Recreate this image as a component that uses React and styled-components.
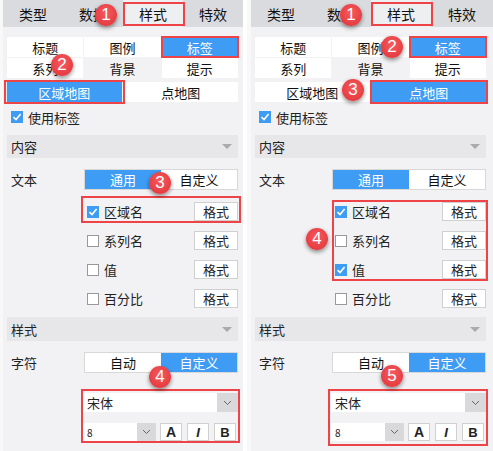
import styled, { createGlobalStyle, css } from "styled-components";

const RED = "#ee4447";
const BLUE = "#3e9cf5";

const GlobalStyle = createGlobalStyle`
  body {
    margin: 0;
    background: #fff;
    font-family: "Noto Sans CJK SC", "Noto Sans", sans-serif;
    font-size: 13px;
    color: #222;
  }
`;

// red annotation frame drawn over an element
const markBox = css`
  position: relative;
  &::after {
    content: "";
    position: absolute;
    inset: ${(p) => p.$mark};
    border: 2px solid ${RED};
    pointer-events: none;
  }
`;

const Page = styled.div`
  display: flex;
  gap: 4px;
  width: 493px;
  height: 451px;
  overflow: hidden;
`;

const StyledPanel = styled.div`
  position: relative;
  display: flex;
  width: ${(p) => p.$w}px;
  height: 451px;
  flex-shrink: 0;
`;

const Strip = styled.div`
  width: 4px;
  background: #f8f8f9;
`;

const Main = styled.div`
  flex: 1;
  display: flex;
  flex-direction: column;
  background: #f2f2f4;
`;

const TabBar = styled.div`
  display: flex;
  height: 27px;
  background: #dadbde;
`;

const Tab = styled.div`
  width: 60px;
  display: flex;
  align-items: center;
  justify-content: center;
  font-size: 14px;
  color: #111;
  background: ${(p) => (p.$active ? "#eeeff1" : "transparent")};
  ${(p) => p.$mark && markBox}
`;

const Body = styled.div`
  width: 231px;
  padding-left: 4px;
`;

const SubGrid = styled.div`
  display: grid;
  grid-template-columns: repeat(3, 1fr);
  gap: 1px;
  margin-top: 10px;
`;

const Cell = styled.div`
  height: 20px;
  display: flex;
  align-items: center;
  justify-content: center;
  background: ${(p) => (p.$on ? BLUE : p.$plain ? "transparent" : "#fff")};
  color: ${(p) => (p.$on ? "#fff" : "#111")};
  ${(p) => p.$mark && markBox}
`;

const MapGrid = styled(SubGrid)`
  grid-template-columns: 1fr 1fr;
  gap: 2px;
  margin-top: 4px;
`;

const CheckLine = styled.div`
  display: flex;
  align-items: center;
  gap: 5px;
  height: 14px;
  margin-top: 8px;
  padding-left: 4px;
`;

const Box = styled.span`
  width: 12px;
  height: 12px;
  box-sizing: border-box;
  flex-shrink: 0;
  display: inline-flex;
  align-items: center;
  justify-content: center;
  background: ${(p) => (p.$on ? BLUE : "#fff")};
  border: 1px solid ${(p) => (p.$on ? BLUE : "#999")};
`;

const Check = ({ on }) => (
  <Box $on={on}>
    {on && (
      <svg width="10" height="10" viewBox="0 0 10 10">
        <path d="M1.5 5.2 L4 7.6 L8.6 2" fill="none" stroke="#fff" strokeWidth="1.6" />
      </svg>
    )}
  </Box>
);

const Header = styled.div`
  display: flex;
  align-items: center;
  justify-content: space-between;
  height: ${(p) => p.$h}px;
  margin-top: ${(p) => p.$top}px;
  padding: 0 6px 0 4px;
  background: #e7e7ea;
  font-size: 13px;
  &::after {
    content: "";
    border-left: 5px solid transparent;
    border-right: 5px solid transparent;
    border-top: 5px solid #aaa;
  }
`;

const Field = styled.div`
  display: flex;
  align-items: center;
  height: 21px;
  margin-top: 11px;
`;

const FieldLabel = styled.div`
  width: 73px;
  padding-left: 4px;
`;

const Segment = styled.div`
  flex: 1;
  height: 100%;
  display: grid;
  grid-template-columns: 1fr 1fr;
  box-sizing: border-box;
  border: 1px solid #d8d8d8;
  background: #fff;
`;

const SegItem = styled.div`
  display: flex;
  align-items: center;
  justify-content: center;
  background: ${(p) => (p.$on ? BLUE : "#fff")};
  color: ${(p) => (p.$on ? "#fff" : "#111")};
`;

const Rows = styled.div`
  display: flex;
  flex-direction: column;
  gap: 10px;
  margin: 12px 0 0 80px;
`;

const RowGroup = styled(Rows)`
  margin: 0;
  ${(p) => p.$mark && markBox}
`;

const Row = styled.div`
  display: flex;
  align-items: center;
  gap: 5px;
  height: 19px;
`;

const FormatBtn = styled.div`
  margin-left: auto;
  width: 44px;
  height: 19px;
  box-sizing: border-box;
  display: flex;
  align-items: center;
  justify-content: center;
  background: #fff;
  border: 1px solid #d0d0d0;
`;

const FontBox = styled.div`
  display: flex;
  flex-direction: column;
  gap: 11px;
  margin: 20px 0 0 76px;
  ${(p) => p.$mark && markBox}
`;

const Select = styled.div`
  display: flex;
  height: ${(p) => p.$h}px;
  width: ${(p) => (p.$w ? `${p.$w}px` : "auto")};
  background: #fff;
`;

const SelectText = styled.div`
  flex: 1;
  display: flex;
  align-items: center;
  padding-left: 4px;
  font-size: ${(p) => p.$size}px;
`;

const Arrow = styled.div`
  width: ${(p) => p.$w}px;
  display: flex;
  align-items: center;
  justify-content: center;
  background: #d9d9dc;
`;

const Chevron = () => (
  <svg width="9" height="6" viewBox="0 0 9 6">
    <path d="M1 1 L4.5 4.5 L8 1" fill="none" stroke="#666" strokeWidth="1" />
  </svg>
);

const SizeRow = styled.div`
  display: flex;
  gap: 4px;
  height: 18px;
`;

const StyleBtn = styled.div`
  width: 22px;
  height: 18px;
  margin-left: ${(p) => p.$gap || 0}px;
  box-sizing: border-box;
  display: flex;
  align-items: center;
  justify-content: center;
  background: #fff;
  border: 1px solid #d0d0d0;
  font-family: "Liberation Sans", Arial, sans-serif;
  font-weight: bold;
  font-size: ${(p) => p.$size || 13}px;
  font-style: ${(p) => (p.$italic ? "italic" : "normal")};
  color: #222;
`;

const Badge = styled.div`
  position: absolute;
  left: ${(p) => p.$x - 11}px;
  top: ${(p) => p.$y - 11}px;
  width: 22px;
  height: 22px;
  border-radius: 50%;
  background: radial-gradient(circle at 50% 40%, #f55b5e, #df3036);
  box-shadow: 0 2px 4px rgba(0, 0, 0, 0.45);
  color: #fff;
  font-family: "Liberation Sans", Arial, sans-serif;
  font-size: 17px;
  display: flex;
  align-items: center;
  justify-content: center;
`;

const rowNames = ["区域名", "系列名", "值", "百分比"];

const panels = [
  {
    w: 243,
    map: 0,
    mapMark: "-2px -3px -2px -3px",
    checks: [true, false, false, false],
    group: 1,
    groupMark: "-6px -3px -2px -6px",
    fontMark: "-4px -2px -2px -2px",
    badges: [
      [106, 15, 1],
      [62, 65, 2],
      [160, 183, 3],
      [160, 377, 4],
    ],
  },
  {
    w: 246,
    map: 1,
    mapMark: "-2px -2px -2px -2px",
    checks: [true, false, true, false],
    group: 3,
    groupMark: "-2px -2px -2px -3px",
    fontMark: "-4px -2px -5px -3px",
    badges: [
      [104, 15, 1],
      [145, 47, 2],
      [106, 90, 3],
      [70, 239, 4],
      [145, 376, 5],
    ],
  },
];

const CheckRow = ({ name, on }) => (
  <Row>
    <Check on={on} />
    {name}
    <FormatBtn>格式</FormatBtn>
  </Row>
);

const Panel = ({ cfg }) => {
  const rows = rowNames.map((n, i) => <CheckRow key={n} name={n} on={cfg.checks[i]} />);
  return (
    <StyledPanel $w={cfg.w}>
      <Strip />
      <Main>
        <TabBar>
          <Tab>类型</Tab>
          <Tab>数据</Tab>
          <Tab $active $mark="2px -2px 1px 0">样式</Tab>
          <Tab style={{ flex: 1 }}>特效</Tab>
        </TabBar>
        <Body>
          <SubGrid>
            <Cell>标题</Cell>
            <Cell>图例</Cell>
            <Cell $on $mark="-1px">标签</Cell>
            <Cell>系列</Cell>
            <Cell $plain>背景</Cell>
            <Cell>提示</Cell>
          </SubGrid>
          <MapGrid>
            <Cell $on={cfg.map === 0} $mark={cfg.map === 0 ? cfg.mapMark : undefined}>
              区域地图
            </Cell>
            <Cell $on={cfg.map === 1} $mark={cfg.map === 1 ? cfg.mapMark : undefined}>
              点地图
            </Cell>
          </MapGrid>
          <CheckLine>
            <Check on />
            使用标签
          </CheckLine>
          <Header $h={23} $top={11}>内容</Header>
          <Field>
            <FieldLabel>文本</FieldLabel>
            <Segment>
              <SegItem $on>通用</SegItem>
              <SegItem>自定义</SegItem>
            </Segment>
          </Field>
          <Rows>
            <RowGroup $mark={cfg.groupMark}>{rows.slice(0, cfg.group)}</RowGroup>
            {rows.slice(cfg.group)}
          </Rows>
          <Header $h={24} $top={9}>样式</Header>
          <Field>
            <FieldLabel>字符</FieldLabel>
            <Segment>
              <SegItem>自动</SegItem>
              <SegItem $on>自定义</SegItem>
            </Segment>
          </Field>
          <FontBox $mark={cfg.fontMark}>
            <Select $h={19}>
              <SelectText $size={13}>宋体</SelectText>
              <Arrow $w={21}>
                <Chevron />
              </Arrow>
            </Select>
            <SizeRow>
              <Select $h={18} $w={73}>
                <SelectText $size={10}>8</SelectText>
                <Arrow $w={19}>
                  <Chevron />
                </Arrow>
              </Select>
              <StyleBtn $size={14}>A</StyleBtn>
              <StyleBtn $italic $gap={1}>I</StyleBtn>
              <StyleBtn $gap={1}>B</StyleBtn>
            </SizeRow>
          </FontBox>
        </Body>
      </Main>
      {cfg.badges.map(([x, y, n]) => (
        <Badge key={n} $x={x} $y={y}>
          {n}
        </Badge>
      ))}
    </StyledPanel>
  );
};

const App = () => (
  <>
    <GlobalStyle />
    <Page>
      {panels.map((cfg, i) => (
        <Panel key={i} cfg={cfg} />
      ))}
    </Page>
  </>
);

export default App;
